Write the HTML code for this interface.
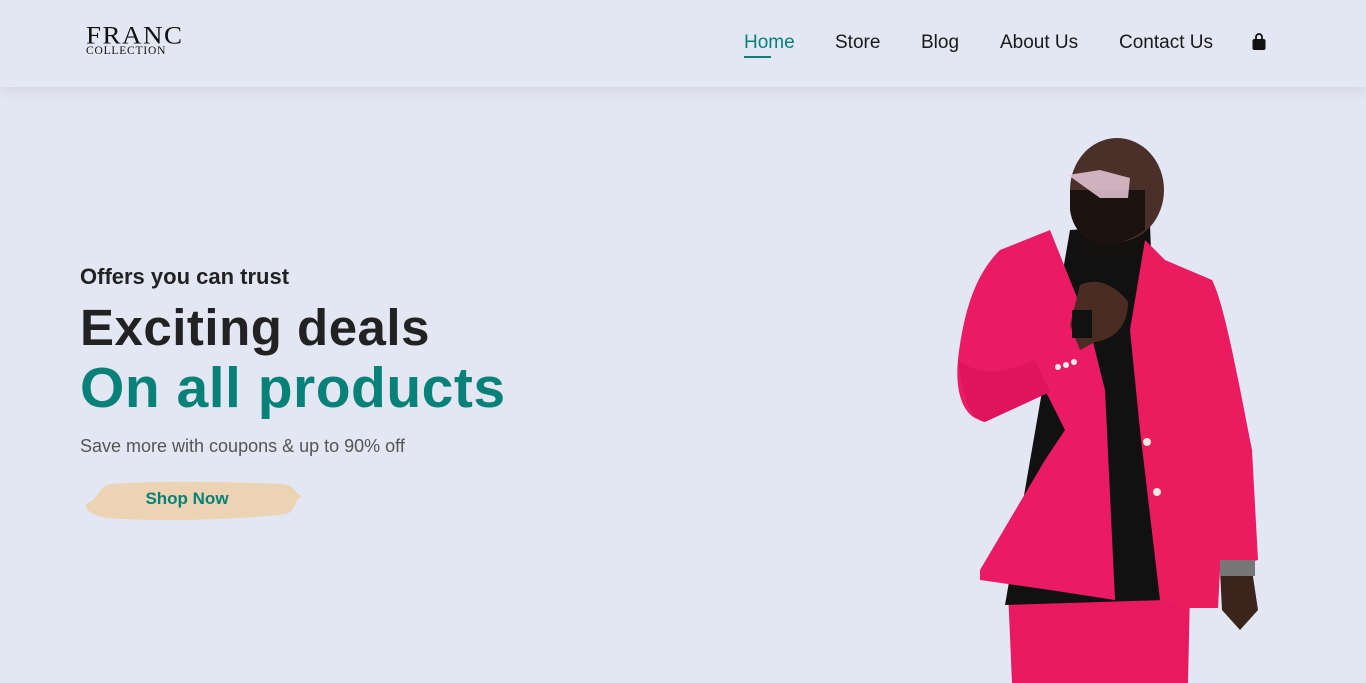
<!DOCTYPE html>
<html><head><meta charset="utf-8"><style>
*{margin:0;padding:0;box-sizing:border-box}
body{width:1366px;height:683px;overflow:hidden;background:#e3e6f3;font-family:"Liberation Sans",sans-serif;position:relative}
header{position:absolute;top:0;left:0;width:1366px;height:87px;background:#e3e6f3;box-shadow:0 4px 14px rgba(0,0,0,.07);z-index:2}
.logo{position:absolute;left:86px;top:22px;font-family:"Liberation Serif",serif;color:#111;line-height:1}
.logo .a{font-size:27px;letter-spacing:1.5px;transform:scaleY(.95)}
.logo .b{font-size:11.5px;letter-spacing:.8px;margin-top:-3px}
nav a{position:absolute;top:32px;font-size:19px;color:#1a1a1a;text-decoration:none}
nav a.act{color:#088178}
nav a.act:after{content:"";position:absolute;left:0;top:24px;width:27px;height:2px;background:#088178}
.h4{position:absolute;left:80px;top:264px;font-size:22px;font-weight:bold;color:#222}
.h2{position:absolute;left:80px;top:298px;font-size:51px;font-weight:bold;color:#222;letter-spacing:.5px}
.h1{position:absolute;left:80px;top:355px;font-size:57px;font-weight:bold;color:#088178;letter-spacing:.5px}
.p{position:absolute;left:80px;top:436px;font-size:18px;color:#555}
.btn{position:absolute;left:82px;top:478px;width:222px;height:44px}
.btn span{position:absolute;left:0;width:210px;top:11px;text-align:center;font-size:17px;font-weight:bold;color:#088178}
</style></head><body>
<header>
<div class="logo"><div class="a">FRANC</div><div class="b">COLLECTION</div></div>
<nav>
<a class="act" style="left:744px">Home</a>
<a style="left:835px">Store</a>
<a style="left:921px">Blog</a>
<a style="left:1000px">About Us</a>
<a style="left:1119px">Contact Us</a>
</nav>
<svg style="position:absolute;left:1251px;top:33px" width="16" height="18" viewBox="0 0 16 18"><path d="M5 6V4a3 3 0 0 1 6 0v2" stroke="#111" stroke-width="1.8" fill="none"/><rect x="1.5" y="6" width="13" height="11" rx="2" fill="#111"/></svg>
</header>
<div class="h4">Offers you can trust</div>
<div class="h2">Exciting deals</div>
<div class="h1">On all products</div>
<div class="p">Save more with coupons &amp; up to 90% off</div>
<div class="btn"><svg width="222" height="44"><path d="M4 26 C20 20 14 8 30 6 C80 2 150 4 200 6 C215 8 210 14 220 18 C212 22 215 30 205 36 C150 42 80 44 25 40 C12 38 2 32 4 26Z" fill="#ecd3b4"/></svg><span>Shop Now</span></div>
<svg style="position:absolute;left:940px;top:130px" width="340" height="553" viewBox="0 0 340 553">
<path d="M68 460 L250 460 L248 553 L72 553Z" fill="#e8195f"/>
<path d="M130 100 L210 95 L225 470 L65 475 Z" fill="#111"/>
<path d="M60 120 C40 140 25 170 18 230 C15 260 22 285 40 290 L105 260 L125 300 L105 330 L40 440 L40 450 L110 460 L175 470 L165 260 L150 200 L130 150 L110 100 Z" fill="#ea1a64"/>
<path d="M205 110 L225 130 L272 150 C285 175 300 260 312 320 L318 430 L280 440 L278 478 L240 478 L220 470 L200 300 L190 200 Z" fill="#ea1b5f"/>
<path d="M18 230 C22 265 30 290 45 292 L110 262 L95 230 C70 240 45 250 18 230Z" fill="#e0145c"/>
<path d="M140 155 C160 145 180 160 188 172 C188 200 170 210 155 212 L140 220 L130 195Z" fill="#4a2c22"/>
<rect x="132" y="180" width="20" height="28" fill="#111"/>
<path d="M140 95 L205 95 L200 125 L145 128Z" fill="#151010"/>
<ellipse cx="177" cy="60" rx="47" ry="52" fill="#4a3028"/>
<path d="M130 80 C135 115 170 125 205 100 L205 60 L130 60Z" fill="#1c1210"/>
<path d="M128 45 L160 40 L190 48 L188 68 L160 68 Z" fill="#e8c8d8" opacity=".85"/>
<path d="M280 440 L312 440 L318 480 L300 500 L282 480Z" fill="#3a241c"/>
<rect x="280" y="430" width="35" height="16" fill="#777"/>
<circle cx="207" cy="312" r="4" fill="#f5e8e0"/><circle cx="217" cy="362" r="4" fill="#f5e8e0"/>
<circle cx="118" cy="237" r="3" fill="#eee"/><circle cx="126" cy="235" r="3" fill="#eee"/><circle cx="134" cy="232" r="3" fill="#eee"/>
</svg>
</body></html>
